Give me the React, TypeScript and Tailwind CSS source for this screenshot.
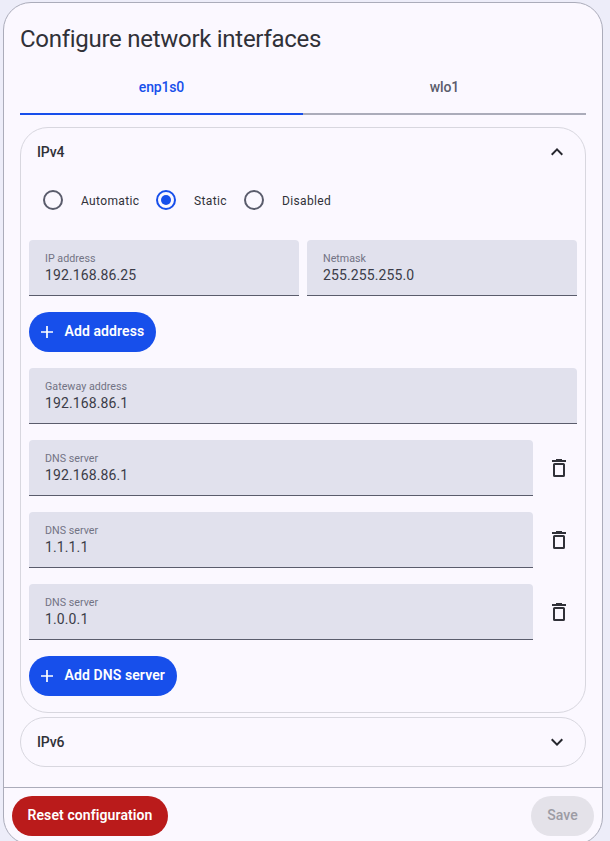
import React from "react";

function Trash() {
  return (
    <svg width="24" height="24" viewBox="0 0 24 24" fill="none" stroke="currentColor">
      <path d="M5 5h14" strokeWidth="2" />
      <path d="M9 3.5h6" strokeWidth="1" />
      <rect x="7" y="8" width="10" height="12" rx="0.6" strokeWidth="2" />
    </svg>
  );
}

function Field({ label, value, className = "flex-1" }: { label: string; value: string; className?: string }) {
  return (
    <div className={`h-14 rounded-t-[4px] border-b border-[#5a5c6c] bg-[#e1e1ed] pl-4 pt-[11px] ${className}`}>
      <div className="text-[10.7px] leading-[15px] tracking-[0.02px] text-[#727384]">{label}</div>
      <div className="text-[14px] leading-[18px] tracking-[0.12px] text-[#3b3c48]">{value}</div>
    </div>
  );
}

function AddButton({ label, className }: { label: string; className: string }) {
  return (
    <button className={`flex h-10 items-center rounded-full bg-[#174feb] pl-[11px] text-white ${className}`}>
      <svg width="14" height="14" viewBox="0 0 14 14" className="shrink-0">
        <path d="M7 1v12M1 7h12" stroke="currentColor" strokeWidth="1.7" />
      </svg>
      <span className="-mt-px ml-[10.5px] whitespace-nowrap text-[14px] font-semibold tracking-[0.1px]">{label}</span>
    </button>
  );
}

function Radio({ label, checked = false, className }: { label: string; checked?: boolean; className: string }) {
  return (
    <div className={`flex items-center ${className}`}>
      <span
        className={`flex size-5 shrink-0 items-center justify-center rounded-full border-2 ${
          checked ? "border-[#174feb]" : "border-[#5a5c6c]"
        }`}
      >
        {checked && <span className="size-[10px] rounded-full bg-[#174feb]" />}
      </span>
      <span className="ml-[18px] mt-px text-[12px] tracking-[0.35px] text-[#303138]">{label}</span>
    </div>
  );
}

function Chevron({ up = false }: { up?: boolean }) {
  return (
    <svg width="24" height="24" viewBox="0 0 24 24" fill="#26272e">
      {up ? (
        <path d="M7.41 15.41 12 10.83l4.59 4.58L18 14l-6-6-6 6z" />
      ) : (
        <path d="M7.41 8.59 12 13.17l4.59-4.58L18 10l-6 6-6-6z" />
      )}
    </svg>
  );
}

export default function App() {
  return (
    <div className="h-[841px] w-[610px] overflow-hidden bg-[#ededf9] pl-[3px] pt-[2px] font-[Roboto,sans-serif]">
      <div className="flex h-[843px] w-[600px] flex-col rounded-[28px] border border-[#abacba] bg-[#fbf8ff]">
        <h1 className="ml-4 mt-5 text-[24px] leading-8 tracking-[-0.28px] text-[#303138]">
          Configure network interfaces
        </h1>
        <div className="mx-4 mt-[5px] grid h-[55px] shrink-0 grid-cols-2 text-center text-[14px] font-medium tracking-[-0.15px]">
          <div className="border-b-2 border-[#174feb] text-[#174feb]">
            <span className="block h-[53px] leading-[54px]">enp1s0</span>
          </div>
          <div className="border-b-2 border-[#abacba] text-[#5a5c6c]">
            <span className="block h-[53px] leading-[54px]">wlo1</span>
          </div>
        </div>

        <section className="mx-4 mt-3 h-[586px] shrink-0 rounded-[28px] border border-[#d8d7df] px-2">
          <div className="flex h-12 items-center justify-between pl-2 pr-2">
            <span className="text-[14px] font-medium tracking-[-0.15px] text-[#303138]">IPv4</span>
            <Chevron up />
          </div>
          <div className="flex h-12 items-center pl-[14px]">
            <Radio label="Automatic" className="w-[113px]" />
            <Radio label="Static" checked className="w-[88px]" />
            <Radio label="Disabled" className="w-[100px]" />
          </div>
          <div className="mt-4 flex gap-2">
            <Field label="IP address" value="192.168.86.25" />
            <Field label="Netmask" value="255.255.255.0" />
          </div>
          <AddButton label="Add address" className="mt-4 w-[127px]" />
          <div className="mt-4 flex flex-col gap-4">
            <Field label="Gateway address" value="192.168.86.1" className="shrink-0" />
            {["192.168.86.1", "1.1.1.1", "1.0.0.1"].map((v) => (
              <div key={v} className="flex items-center text-[#303138]">
                <Field label="DNS server" value={v} className="w-[504px]" />
                <button className="ml-[14px]" aria-label="Delete">
                  <Trash />
                </button>
              </div>
            ))}
          </div>
          <AddButton label="Add DNS server" className="mt-4 w-[148px]" />
        </section>

        <section className="mx-4 mt-1 flex h-[50px] shrink-0 items-center justify-between rounded-[28px] border border-[#d8d7df] px-4">
          <span className="text-[14px] font-medium tracking-[-0.15px] text-[#303138]">IPv6</span>
          <Chevron />
        </section>

        <footer className="mt-5 flex shrink-0 items-center justify-between border-t border-[#abacba] p-2">
          <button className="h-10 w-[156px] rounded-full bg-[#ba1b1b] pb-px text-[14px] font-semibold tracking-[0.1px] text-white">
            Reset configuration
          </button>
          <button className="h-10 w-[63px] rounded-full bg-[#e4e2e9] pb-px text-[14px] font-medium tracking-[0.1px] text-[#9c9ba4]">
            Save
          </button>
        </footer>
      </div>
    </div>
  );
}
